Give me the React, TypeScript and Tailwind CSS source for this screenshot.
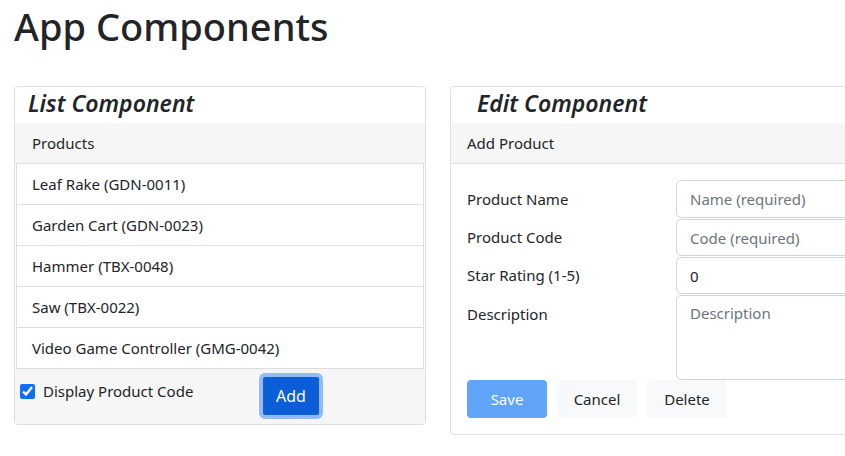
import React, { useState } from "react";

type Product = {
    name: string;
    code: string;
};

const products: Product[] = [
    { name: "Leaf Rake", code: "GDN-0011" },
    { name: "Garden Cart", code: "GDN-0023" },
    { name: "Hammer", code: "TBX-0048" },
    { name: "Saw", code: "TBX-0022" },
    { name: "Video Game Controller", code: "GMG-0042" },
];

const ListComponent: React.FC = () => {
    const [showCode, setShowCode] = useState(true);

    return (
        <div className="w-[412px] shrink-0 border border-[#dedede] rounded-[4px] overflow-hidden">
            <h2 className="h-[36px] pl-[13px] text-[23px] leading-[32px] font-semibold italic">List Component</h2>
            <div className="h-[41px] pl-[17px] flex items-center bg-[#f6f6f6] border-b border-[#dedede] text-[15px]">
                Products
            </div>
            <ul className="mx-px border-x border-[#dedede]">
                {products.map((p) => (
                    <li key={p.code} className="h-[41px] pl-[15px] flex items-center border-b border-[#dedede] text-[15px]">
                        {showCode ? `${p.name} (${p.code})` : p.name}
                    </li>
                ))}
            </ul>
            <div className="h-[55px] bg-[#f6f6f6] flex items-start pl-[5px]">
                <label className="flex items-center gap-[8px] mt-[11px] w-[242px] text-[15px]">
                    <input
                        type="checkbox"
                        checked={showCode}
                        onChange={(e) => setShowCode(e.target.checked)}
                        className="w-[15px] h-[15px] accent-[#0d6efd]"
                    />
                    Display Product Code
                </label>
                <button className="mt-[4px] -ml-[3px] w-[64px] h-[46px] rounded-[6px] border-[4px] border-[#93bbf7] bg-[#0b5ed7] text-white text-[16px]">
                    Add
                </button>
            </div>
        </div>
    );
};

const EditComponent: React.FC = () => {
    return (
        <div className="w-[412px] shrink-0 border border-[#dedede] rounded-[4px] overflow-hidden">
            <h2 className="h-[36px] pl-[26px] text-[23px] leading-[32px] font-semibold italic">Edit Component</h2>
            <div className="h-[41px] pl-[16px] flex items-center bg-[#f6f6f6] border-b border-[#dedede] text-[15px]">
                Add Product
            </div>
            <form className="pt-[16px] pb-[16px] pl-[16px]" onSubmit={(e) => e.preventDefault()}>
                <div className="flex flex-col gap-px">
                    <div className="flex">
                        <label className="w-[209px] shrink-0 h-[38px] flex items-center text-[15px]">Product Name</label>
                        <input
                            placeholder="Name (required)"
                            className="flex-1 min-w-0 h-[38px] px-[13px] border border-[#ced4da] rounded-[5px] text-[15px] placeholder:text-[#6c757d]"
                        />
                    </div>
                    <div className="flex">
                        <label className="w-[209px] shrink-0 h-[37px] flex items-center text-[15px]">Product Code</label>
                        <input
                            placeholder="Code (required)"
                            className="flex-1 min-w-0 h-[37px] px-[13px] border border-[#ced4da] rounded-[5px] text-[15px] placeholder:text-[#6c757d]"
                        />
                    </div>
                    <div className="flex">
                        <label className="w-[209px] shrink-0 h-[37px] flex items-center text-[15px]">Star Rating (1-5)</label>
                        <input
                            defaultValue="0"
                            className="flex-1 min-w-0 h-[37px] px-[13px] border border-[#ced4da] rounded-[5px] text-[15px]"
                        />
                    </div>
                    <div className="flex">
                        <label className="w-[209px] shrink-0 pt-[8px] text-[15px]">Description</label>
                        <textarea
                            placeholder="Description"
                            className="flex-1 min-w-0 h-[85px] px-[13px] py-[6px] border border-[#ced4da] rounded-[5px] text-[15px] resize-none placeholder:text-[#6c757d]"
                        />
                    </div>
                </div>
                <div className="flex gap-[10px]">
                    <button className="w-[80px] h-[38px] rounded-[4px] bg-[#60a5fa] text-white text-[15px]">Save</button>
                    <button className="w-[80px] h-[38px] rounded-[4px] bg-[#f8f9fa] text-[15px]">Cancel</button>
                    <button className="w-[80px] h-[38px] rounded-[4px] bg-[#f8f9fa] text-[15px]">Delete</button>
                </div>
            </form>
        </div>
    );
};

export default function App() {
    return (
        <div className="pl-[14px] text-[#212529] font-['Noto_Sans',sans-serif]">
            <h1 className="text-[38px] leading-[50px] font-medium pt-[1px]">App Components</h1>
            <div className="flex gap-[24px] mt-[35px] items-start overflow-hidden">
                <ListComponent />
                <EditComponent />
            </div>
        </div>
    );
}
